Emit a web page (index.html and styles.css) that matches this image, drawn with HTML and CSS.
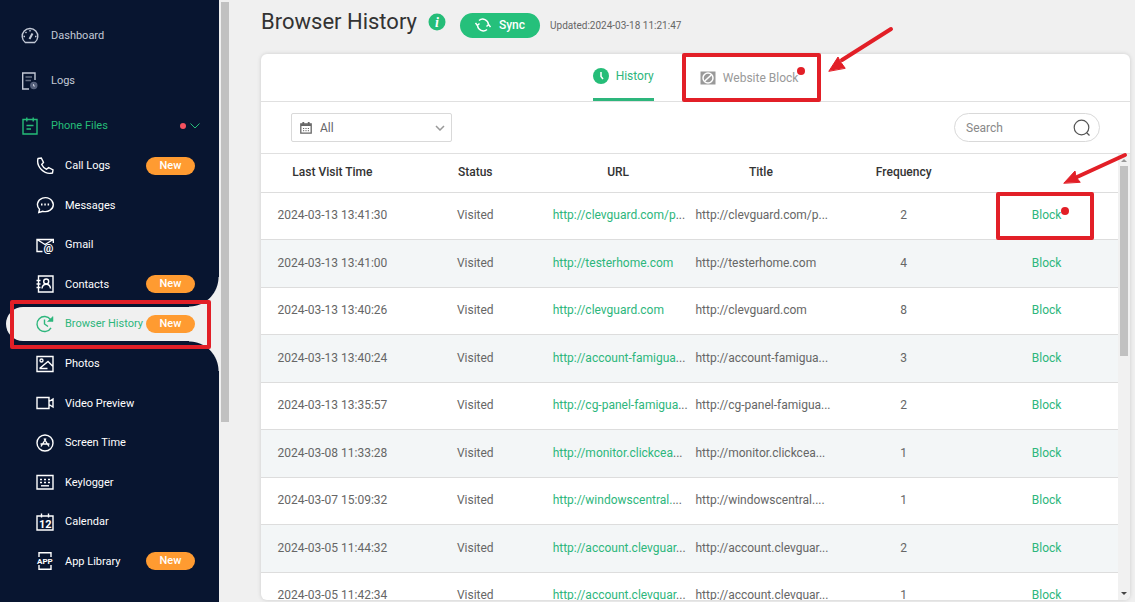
FILE: index.html
```
<!DOCTYPE html>
<html lang="en">
<head>
    <meta charset="UTF-8">
    <meta name="viewport" content="width=device-width, initial-scale=1.0">
    <title>Browser History</title>
    <link rel="stylesheet" href="styles.css">
</head>
<body>
    <nav class="sidebar">
        <ul class="menu">
            <li><a href="#dashboard">
                <svg class="icon" viewBox="0 0 18 18"><path d="M4.300 15.500A7.800 7.800 0 1 1 13.700 15.500Z"/><path d="M8.500 12L11.500 6.500" stroke-width="2"/><path d="M9 3v1.500M4.500 5l1 1M2.500 9.500H4M14 9.500h1.500"/></svg>
                Dashboard</a></li>
            <li><a href="#logs">
                <svg class="icon" viewBox="0 0 18 18"><path d="M8 17H1.700V1H14v7"/><path d="M4.500 5h6.500M4.500 8.500H10" opacity=".5"/><circle cx="12.800" cy="13.500" r="3" fill="#56617c" stroke="#56617c"/><path d="M12.500 12v2h1.500" stroke-width="1"/></svg>
                Logs</a></li>
            <li><a href="#files" class="open">
                <svg class="icon" viewBox="0 0 18 18"><path d="M2 2.500h14V17H2ZM5.800.5v4M12.200.5v4M5.500 8.500h7M5.500 12h4.500"/></svg>
                Phone Files
                <span class="alert"></span>
                <svg class="chevron" viewBox="0 0 10 6"><path d="M.5.500L5 5 9.500.5"/></svg></a></li>
        </ul>
        <ul class="submenu">
            <li><a href="#calls">
                <svg class="icon" viewBox="0 0 18 18"><path d="M2 1.500L5.300 1 7.500 5.500 5.700 7.500C6.700 9.800 8.300 11.300 10.600 12.300L12.600 10.500 17 12.800 16.500 16C8 18 0 9.500 2 1.500Z"/></svg>
                Call Logs<span class="badge">New</span></a></li>
            <li><a href="#messages">
                <svg class="icon" viewBox="0 0 18 18"><path d="M2.800 16.500L3.500 13.300A7.900 7 0 1 1 7 15.300Z"/><path d="M5 8.500h1.500M8.300 8.500h1.500M11.600 8.500h1.500" stroke-width="2"/></svg>
                Messages</a></li>
            <li><a href="#gmail">
                <svg class="icon" viewBox="0 0 18 18"><path d="M6.500 15.500H1V3.500H17.300V7M1 3.500L9 8.500 17.300 3.500"/><text x="7.500" y="16" font-size="11">@</text></svg>
                Gmail</a></li>
            <li><a href="#contacts">
                <svg class="icon" viewBox="0 0 18 18"><path d="M2.500 1H17v16H2.500ZM.5 5.500h4M.5 9h4M.5 12.500h4"/><circle cx="10.200" cy="6.500" r="2.500"/><path d="M6 13.500C6.500 7.800 14 7.800 14.500 13.500"/></svg>
                Contacts<span class="badge">New</span></a></li>
            <li><a href="#history" class="active">
                <svg class="icon" viewBox="0 0 18 18"><path d="M15 12.800A7.500 7.500 0 1 1 14.500 4.500M8.500 4.500V9L12 11.500"/><path d="M17 1.500V6.500H11.500Z" fill="currentColor" stroke-width=".5"/></svg>
                Browser History<span class="badge">New</span><span class="mark mark-menu"></span></a></li>
            <li><a href="#photos">
                <svg class="icon" viewBox="0 0 18 18"><path d="M1 1.500H17v15H1ZM3.500 13.500L12 6.500 17 11.500M3.500 13.500H11.500"/><circle cx="5.500" cy="5.500" r="1.500"/></svg>
                Photos</a></li>
            <li><a href="#video">
                <svg class="icon" viewBox="0 0 18 18"><path d="M1 3.500H13v11H1ZM13 7.500L17 5V13L13 10.500"/></svg>
                Video Preview</a></li>
            <li><a href="#screen">
                <svg class="icon" viewBox="0 0 18 18"><circle cx="9" cy="9" r="8"/><path d="M8 4.500L13 12.500M10 4.500L5 12.500M4.500 10h9"/></svg>
                Screen Time</a></li>
            <li><a href="#keylogger">
                <svg class="icon" viewBox="0 0 18 18"><path d="M1 2.500H17v13.500H1Z"/><path d="M4 6.500h10M4 9.500h10" stroke-dasharray="2"/><path d="M5 12.800h8"/></svg>
                Keylogger</a></li>
            <li><a href="#calendar">
                <svg class="icon" viewBox="0 0 18 18"><path d="M1 3H17V17H1ZM5.500.5v4M12.500.5v4"/><text x="3" y="15" font-size="11">12</text></svg>
                Calendar</a></li>
            <li><a href="#apps">
                <svg class="icon" viewBox="0 0 18 18"><path d="M3 5V.8H15V5M3 13v4.200H15V13"/><text x="1" y="12" font-size="8">APP</text></svg>
                App Library<span class="badge">New</span></a></li>
        </ul>
    </nav>
    <div class="side-scroll"><div class="thumb"></div></div>

    <main>
        <header>
            <h1>Browser History</h1>
            <svg class="info" viewBox="0 0 18 18"><circle cx="9" cy="9" r="8.500"/><text x="9" y="14">i</text></svg>
            <button type="button" class="sync">
                <svg viewBox="0 0 16 14"><path d="M4 2.500A5.800 5.800 0 0 1 13.500 6.500M12 11.500A5.800 5.800 0 0 1 2.500 7.500M.5 5L2.300 7.500 4.500 5.500M11.500 8.500L13.700 6.500 15.500 9"/></svg>
                Sync
            </button>
            <span class="updated">Updated:2024-03-18 11:21:47</span>
        </header>

        <section class="card">
            <div class="tabs">
                <a href="#history" class="tab current">
                    <svg viewBox="0 0 16 16"><circle cx="8" cy="8" r="8" fill="#25bd78"/><path d="M8 4V8.500L10 11" fill="none" stroke="#fff" stroke-width="1.500"/></svg>
                    History</a>
                <a href="#block" class="tab">
                    <svg viewBox="0 0 16 16"><path d="M.5 1.500h15v13H.5Z" fill="#999"/><circle cx="8" cy="8" r="5" fill="none" stroke="#fff" stroke-width="1.500"/><path d="M4.800 11L11.200 5" stroke="#fff" stroke-width="1.500"/></svg>
                    Website Block
                    <span class="dot dot-tab"></span><span class="mark mark-tab"></span></a>
            </div>

            <div class="filters">
                <div class="range">
                    <svg class="cal" viewBox="0 0 12 12"><path d="M.8 2H11.200V11.200H.8Z" fill="none" stroke="#666" stroke-width="1.300"/><path d="M1 3.200H11M3.300 0v2.500M8.700 0v2.500" stroke="#666" stroke-width="1.800"/><path d="M3 6.500h6.500M3 8.700h6.500" stroke="#666" stroke-dasharray="1.200"/></svg>
                    <select aria-label="Date range"><option>All</option></select>
                    <svg class="arrow-down" viewBox="0 0 10 6"><path d="M1 1L5 5 9 1"/></svg>
                </div>
                <div class="search">
                    <input type="text" placeholder="Search" aria-label="Search">
                    <svg viewBox="0 0 18 18"><circle cx="8.500" cy="8.500" r="7.300"/><path d="M13.500 13.500L16.500 16.500"/></svg>
                </div>
            </div>

            <div class="table-area">
                <table>
                    <thead>
                        <tr><th>Last Visit Time</th><th>Status</th><th>URL</th><th>Title</th><th>Frequency</th><th></th></tr>
                    </thead>
                    <tbody>
                        <tr><td>2024-03-13 13:41:30</td><td>Visited</td><td class="link"><a href="#">http://clevguard.com/p</a>...</td><td class="link">http://clevguard.com/p...</td><td>2</td><td><a href="#" class="block">Block<span class="dot dot-row"></span><span class="mark mark-row"></span></a></td></tr>
                        <tr><td>2024-03-13 13:41:00</td><td>Visited</td><td class="link"><a href="#">http://testerhome.com</a></td><td class="link">http://testerhome.com</td><td>4</td><td><a href="#">Block</a></td></tr>
                        <tr><td>2024-03-13 13:40:26</td><td>Visited</td><td class="link"><a href="#">http://clevguard.com</a></td><td class="link">http://clevguard.com</td><td>8</td><td><a href="#">Block</a></td></tr>
                        <tr><td>2024-03-13 13:40:24</td><td>Visited</td><td class="link"><a href="#">http://account-famigua</a>...</td><td class="link">http://account-famigua...</td><td>3</td><td><a href="#">Block</a></td></tr>
                        <tr><td>2024-03-13 13:35:57</td><td>Visited</td><td class="link"><a href="#">http://cg-panel-famigua</a>...</td><td class="link">http://cg-panel-famigua...</td><td>2</td><td><a href="#">Block</a></td></tr>
                        <tr><td>2024-03-08 11:33:28</td><td>Visited</td><td class="link"><a href="#">http://monitor.clickcea</a>...</td><td class="link">http://monitor.clickcea...</td><td>1</td><td><a href="#">Block</a></td></tr>
                        <tr><td>2024-03-07 15:09:32</td><td>Visited</td><td class="link"><a href="#">http://windowscentral.</a>...</td><td class="link">http://windowscentral....</td><td>1</td><td><a href="#">Block</a></td></tr>
                        <tr><td>2024-03-05 11:44:32</td><td>Visited</td><td class="link"><a href="#">http://account.clevguar</a>...</td><td class="link">http://account.clevguar...</td><td>2</td><td><a href="#">Block</a></td></tr>
                        <tr><td>2024-03-05 11:42:34</td><td>Visited</td><td class="link"><a href="#">http://account.clevguar</a>...</td><td class="link">http://account.clevguar...</td><td>1</td><td><a href="#">Block</a></td></tr>
                    </tbody>
                </table>
                <div class="table-scroll">
                    <svg viewBox="0 0 8 4"><path d="M1 4L4 1 7 4Z" fill="#999"/></svg>
                    <div class="thumb"></div>
                    <svg viewBox="0 0 8 4"><path d="M1 0L4 3 7 0Z" fill="#444"/></svg>
                </div>
            </div>

            <svg class="pointer pointer-tab" viewBox="0 0 66 46"><path d="M63 3L14 34" stroke-width="4"/><path d="M1 45L10 31 12 35 17 42Z"/></svg>
            <svg class="pointer pointer-row" viewBox="0 0 66 34"><path d="M62 4L14 26" stroke-width="4"/><path d="M1 32L12 20 13 26 17 31Z"/></svg>
        </section>
    </main>
</body>
</html>
```
FILE: styles.css
```
* {
    box-sizing: border-box;
}
body {
    display: flex;
    height: 100vh;
    margin: 0;
    overflow: hidden;
    background-color: #f0f0f0;
    font-family: Roboto, sans-serif;
    font-size: 12px;
    color: #666;
}
a {
    color: #2db67c;
    text-decoration: none;
}
ul {
    list-style: none;
    margin: 0;
    padding: 0;
}

/* sidebar */
.sidebar {
    display: flex;
    flex-direction: column;
    flex: none;
    width: 219px;
    padding: 15px 0 21px;
    background-color: #081530;
    font-size: 11px;
    white-space: nowrap;
}
.sidebar a {
    position: relative;
    display: flex;
    align-items: center;
    gap: 12px;
    color: #fff;
}
.menu {
    display: flex;
    flex-direction: column;
    gap: 4px;
}
.menu a {
    height: 41px;
    padding: 0 19px 0 21px;
    color: #c3c9d6;
}
.menu a.open {
    color: #25bd78;
}
.icon {
    flex: none;
    width: 18px;
    height: 18px;
    fill: none;
    stroke: currentColor;
    stroke-width: 1.4;
}
.icon text {
    fill: currentColor;
    stroke: none;
    font-weight: 700;
}
.alert {
    width: 6px;
    height: 6px;
    margin-left: auto;
    border-radius: 50%;
    background-color: #f5515f;
}
.chevron {
    width: 10px;
    margin-left: -8px;
    fill: none;
    stroke: currentColor;
}
.submenu {
    display: flex;
    flex-direction: column;
    flex: 1;
}
.submenu li {
    display: flex;
    flex: 1;
    align-items: center;
}
.submenu a {
    flex: 1;
    gap: 11px;
    height: 34px;
    margin-left: 6px;
    padding: 0 24px 0 30px;
}
.badge {
    position: absolute;
    right: 24px;
    width: 49px;
    border-radius: 9px;
    background-color: #ff9b31;
    color: #fff;
    font-weight: 500;
    line-height: 18px;
    text-align: center;
}
.submenu a.active {
    border-radius: 17px 0 0 17px;
    background-color: #f0f0f0;
    color: #2db67c;
}
.active::before,
.active::after {
    content: "";
    position: absolute;
    right: 0;
    width: 30px;
    height: 30px;
}
.active::before {
    bottom: 100%;
    background: radial-gradient(circle at 0 0, transparent 29px, #f0f0f0 30px);
}
.active::after {
    top: 100%;
    background: radial-gradient(circle at 0 100%, transparent 29px, #f0f0f0 30px);
}
.side-scroll {
    flex: none;
    width: 10px;
    padding: 2px 0 0 2px;
}
.thumb {
    background-color: #c1c1c1;
}
.side-scroll .thumb {
    height: 70%;
}

/* main */
main {
    display: flex;
    flex-direction: column;
    flex: 1;
    min-width: 0;
    padding: 0 5px 2px 32px;
}
header {
    display: flex;
    flex: none;
    align-items: center;
    height: 54px;
    padding-bottom: 4px;
}
h1 {
    margin: 0 11px 8px 0;
    color: #333;
    font-size: 22px;
    font-weight: 400;
}
.info {
    width: 18px;
    margin: 0 14px 6px 0;
    fill: #25bd78;
}
.info text {
    fill: #fff;
    font: italic 700 14px "Liberation Serif", serif;
    text-anchor: middle;
}
.sync {
    display: flex;
    align-items: center;
    gap: 8px;
    height: 25px;
    padding: 0 15px;
    border: 0;
    border-radius: 13px;
    background-color: #25c07b;
    color: #fff;
    font: 500 12px Roboto, sans-serif;
}
.sync svg {
    width: 16px;
    fill: none;
    stroke: #fff;
    stroke-width: 1.5;
}
.updated {
    margin-left: 10px;
    font-size: 10px;
}
.card {
    position: relative;
    display: flex;
    flex-direction: column;
    flex: 1;
    min-height: 0;
    border-radius: 6px;
    background-color: #fff;
    box-shadow: 0 0 4px rgba(0, 0, 0, 0.15);
}
.tabs {
    display: flex;
    flex: none;
    justify-content: center;
    gap: 46px;
    height: 48px;
    border-bottom: 1px solid #e0e0e0;
}
.tab {
    position: relative;
    display: flex;
    align-items: center;
    gap: 7px;
    color: #999;
}
.tab svg {
    width: 16px;
}
.tab.current {
    border-bottom: 3px solid #2db67c;
    color: #2db67c;
}
.filters {
    display: flex;
    flex: none;
    align-items: center;
    justify-content: space-between;
    height: 52px;
    padding: 0 30px;
    border-bottom: 1px solid #e0e0e0;
}
.range,
.search {
    position: relative;
    display: flex;
    align-items: center;
}
.range select,
.search input {
    height: 29px;
    border: 1px solid #d9d9d9;
    background-color: transparent;
    color: #666;
    font: 12px Roboto, sans-serif;
}
.range select {
    width: 161px;
    padding: 0 28px;
    border-radius: 2px;
    appearance: none;
}
.cal,
.arrow-down,
.search svg {
    position: absolute;
    pointer-events: none;
}
.cal {
    left: 9px;
    width: 12px;
}
.arrow-down {
    right: 7px;
    width: 10px;
    fill: none;
    stroke: #999;
    stroke-width: 1.5;
}
.search input {
    width: 146px;
    padding: 0 36px 0 11px;
    border-radius: 15px;
}
.search input::placeholder {
    color: #888;
}
.search svg {
    right: 9px;
    width: 18px;
    fill: none;
    stroke: #555;
    stroke-width: 1.2;
}

/* table */
.table-area {
    display: flex;
    flex: 1;
    align-items: flex-start;
    min-height: 0;
    overflow: hidden;
    border-radius: 0 0 6px 6px;
}
table {
    width: 100%;
    table-layout: fixed;
    border-spacing: 0;
}
th,
td {
    height: 47px;
    padding: 0 0 2px;
    border-bottom: 1px solid #ddd;
    text-align: center;
    white-space: nowrap;
}
th {
    height: 39px;
    color: #333;
    font-weight: 500;
}
td.link {
    padding-left: 6px;
    text-align: left;
}
tbody tr:nth-child(even) td {
    height: 48px;
    background-color: #f3f6f7;
}
.block {
    position: relative;
}
.table-scroll {
    display: flex;
    flex: none;
    flex-direction: column;
    align-self: stretch;
    width: 12px;
    padding: 4px 2px;
    background-color: #f1f1f1;
}
.table-scroll .thumb {
    height: 190px;
    margin: 4px 0 auto;
}

/* red call-outs */
.mark {
    position: absolute;
    border: 4px solid #e21f27;
    border-radius: 2px;
}
.mark-menu {
    z-index: 1;
    inset: -7px 8px -8px 4px;
}
.mark-tab {
    inset: -1px -23px -1px -18px;
}
.mark-row {
    inset: -16px -33px -18px -36px;
}
.dot {
    position: absolute;
    width: 8px;
    height: 8px;
    border-radius: 50%;
    background-color: #e21f27;
}
.dot-tab {
    top: 13px;
    right: -7px;
}
.dot-row {
    top: -1px;
    right: -8px;
}
.pointer {
    position: absolute;
    width: 66px;
    fill: #e21f27;
    stroke: #e21f27;
    stroke-linecap: round;
}
.pointer-tab {
    top: -28px;
    right: 236px;
}
.pointer-row {
    top: 97px;
    right: 1px;
}
```
